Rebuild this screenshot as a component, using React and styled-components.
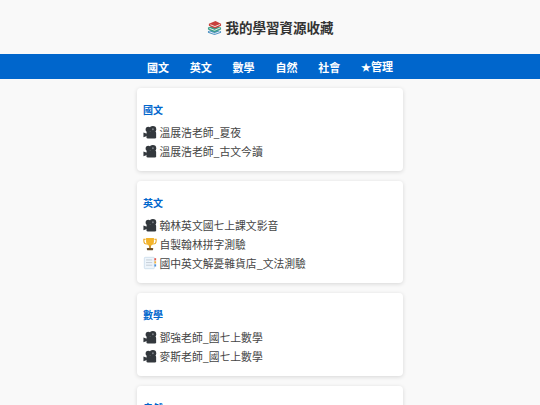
import React from 'react'
import styled, { createGlobalStyle } from 'styled-components'

const GlobalStyle = createGlobalStyle`
    html, body {
        margin: 0;
        padding: 0;
        height: 405px;
        overflow: hidden;
        background: #f9f9f9;
        font-family: "Noto Sans CJK TC", "Noto Sans", sans-serif;
    }
    * {
        box-sizing: border-box;
    }
`

// Style
const Header = styled.header`
    height: 54px;
    display: flex;
    align-items: center;
    justify-content: center;
    gap: 4px;
    background: #f9f9f9;
`

const Title = styled.h1`
    margin: 0;
    font-size: 13.5px;
    line-height: 20px;
    font-weight: 700;
    color: #333;
`

const Nav = styled.nav`
    height: 25px;
    display: flex;
    align-items: center;
    justify-content: center;
    gap: 20.8px;
    background: #0066cc;
`

const NavLink = styled.a`
    font-size: 11px;
    line-height: 26px;
    font-weight: 700;
    color: #fff;
`

const Star = styled.span`
    font-size: 10px;
`

const Main = styled.main`
    width: 266px;
    margin: 9px auto 0;
    display: flex;
    flex-direction: column;
    gap: 10px;
`

const Card = styled.section`
    padding: 14px 6px 11px;
    background: #fff;
    border-radius: 4px;
    box-shadow: 0 1px 4px rgba(0, 0, 0, 0.14);
`

const CardTitle = styled.h2`
    margin: 0 0 5px;
    font-size: 10px;
    line-height: 15px;
    font-weight: 700;
    color: #0066cc;
`

const Item = styled.a`
    height: 19px;
    display: flex;
    align-items: center;
    gap: 2.5px;
    font-size: 10.8px;
    color: #444;
`

const IconBox = styled.svg`
    width: ${(props) => props.$size || 14}px;
    height: ${(props) => props.$size || 14}px;
    flex: none;
`

// Icons
const Books = () => (
    <IconBox $size={15} viewBox="0 0 16 16">
        <path d="M1 12l6-2.500 8 2.500v1.500L8 16l-7-2.500z" fill="#4f93c4" />
        <path d="M2.500 12.500 8 14.500l6-2.200" fill="none" stroke="#e8eef2" strokeWidth="1" />
        <path d="M1 8l7-2.500L15 8v2l-7 3-7-3z" fill="#3f9f8a" />
        <path d="M2.500 8.800 8 11l6-2.500" fill="none" stroke="#e8f0ec" strokeWidth="1" />
        <path d="M2 4l7-3 6 3v2L8.500 9 2 6z" fill="#c8403c" />
        <path d="M3.500 5 8.500 7l5.500-2.300" fill="none" stroke="#f4e4e2" strokeWidth="1" />
    </IconBox>
)

const Camera = () => (
    <IconBox viewBox="0 0 16 16">
        <circle cx="6" cy="5" r="3" fill="#33383d" />
        <circle cx="11.300" cy="4.800" r="3.800" fill="#33383d" />
        <rect x="4" y="7.500" width="11" height="8" rx="1.500" fill="#33383d" />
        <path d="M0.500 8.500 4.500 10v2.500l-4 1.500z" fill="#33383d" />
        <circle cx="11.300" cy="4.800" r="1.100" fill="#7a7f85" />
    </IconBox>
)

const Trophy = () => (
    <IconBox viewBox="0 0 16 16">
        <path d="M3 2.500H1v2c0 2 1.500 3.500 3.500 3.500M13 2.500h2v2c0 2-1.500 3.500-3.500 3.500" fill="none" stroke="#e8a317" strokeWidth="1.200" />
        <path d="M3.500 1h9v4.500c0 2.500-2 4.500-4.500 4.500s-4.500-2-4.500-4.500z" fill="#f4b42a" />
        <rect x="7" y="9.500" width="2" height="3" fill="#c98a12" />
        <rect x="4.500" y="12.500" width="7" height="2.500" rx=".5" fill="#6e4f26" />
    </IconBox>
)

const Tabs = () => (
    <IconBox viewBox="0 0 16 16">
        <rect x="1.500" y="1.500" width="11.500" height="13" rx="1" fill="#eef5fb" stroke="#bcd3e6" strokeWidth=".7" />
        <path d="M3.500 4.500h7M3.500 7.500h7M3.500 10.500h7" stroke="#b4bec8" strokeWidth=".8" />
        <rect x="13" y="2.500" width="2" height="2.500" fill="#e4574c" />
        <rect x="13" y="6" width="2" height="2.500" fill="#f2b33d" />
        <rect x="13" y="9.500" width="2" height="2.500" fill="#4a90d9" />
    </IconBox>
)

const icons = { camera: Camera, trophy: Trophy, tabs: Tabs }

// Data
const navLinks = ['國文', '英文', '數學', '自然', '社會']

const sections = [
    {
        title: '國文',
        items: [
            { icon: 'camera', label: '溫展浩老師_夏夜' },
            { icon: 'camera', label: '溫展浩老師_古文今讀' },
        ],
    },
    {
        title: '英文',
        items: [
            { icon: 'camera', label: '翰林英文國七上課文影音' },
            { icon: 'trophy', label: '自製翰林拼字測驗' },
            { icon: 'tabs', label: '國中英文解憂雜貨店_文法測驗' },
        ],
    },
    {
        title: '數學',
        items: [
            { icon: 'camera', label: '鄧強老師_國七上數學' },
            { icon: 'camera', label: '麥斯老師_國七上數學' },
        ],
    },
    {
        title: '自然',
        items: [],
    },
]

// Component
export default function App() {
    return (
        <>
            <GlobalStyle />
            <Header>
                <Books />
                <Title>我的學習資源收藏</Title>
            </Header>
            <Nav>
                {navLinks.map((link) => (
                    <NavLink key={link}>{link}</NavLink>
                ))}
                <NavLink><Star>★</Star>管理</NavLink>
            </Nav>
            <Main>
                {sections.map((section) => (
                    <Card key={section.title}>
                        <CardTitle>{section.title}</CardTitle>
                        {section.items.map((item) => {
                            const Icon = icons[item.icon]
                            return (
                                <Item key={item.label}>
                                    <Icon />
                                    {item.label}
                                </Item>
                            )
                        })}
                    </Card>
                ))}
            </Main>
        </>
    )
}
